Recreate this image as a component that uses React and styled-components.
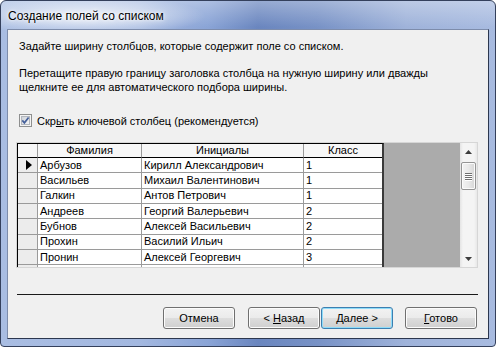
import React from 'react';
import styled, { createGlobalStyle } from 'styled-components';

const GlobalStyle = createGlobalStyle`
  html, body {
    margin: 0;
    padding: 0;
    background: #ffffff;
  }
  * {
    box-sizing: border-box;
  }
`;

const Window = styled.div`
  width: 496px;
  height: 347px;
  border: 1px solid #34405c;
  border-radius: 6px 6px 4px 4px;
  padding: 28px 6px 7px 6px;
  display: flex;
  flex-direction: column;
  position: relative;
  font-family: "Liberation Sans", Arial, sans-serif;
  background:
    radial-gradient(ellipse 120px 20px at 85px 15px, rgba(255, 255, 255, 0.8), rgba(255, 255, 255, 0) 100%),
    linear-gradient(180deg, rgba(255, 255, 255, 0.3) 0px, rgba(255, 255, 255, 0) 26px),
    linear-gradient(90deg, #a9bde2 0%, #a3b8e0 28%, #8aa4d6 42%, #6a86bf 52%, #7892c6 64%, #9fb3da 82%, #a8bbe0 100%);
`;

const Title = styled.div`
  position: absolute;
  left: 7px;
  top: 8px;
  font-size: 12px;
  color: #000;
  text-shadow: 0 0 6px #fff, 0 0 3px #fff;
`;

const Client = styled.div`
  flex: 1;
  background: #f0f0f0;
  border: 1px solid #7d8cab;
  border-right-color: #2c374f;
  border-bottom-color: #2c374f;
  padding: 0 10px 0 8px;
  display: flex;
  flex-direction: column;
  font-size: 11px;
  color: #000;
`;

const Intro = styled.p`
  margin: 9px 0 0 3px;
  line-height: 15px;
`;

const Hint = styled.p`
  margin: 12px 0 0 3px;
  line-height: 14px;
`;

const CheckRow = styled.label`
  margin: 19px 0 0 3px;
  height: 15px;
  display: flex;
  align-items: center;
  gap: 5px;
`;

const Key = styled.span`
  text-decoration: underline;
`;

const TableBox = styled.div`
  margin-top: 14px;
  height: 126px;
  border: 1px solid #d6d6d6;
  display: flex;
  overflow: hidden;
`;

const Sheet = styled.div`
  display: grid;
  grid-template-columns: 20px 104px 162px 78px;
  grid-template-rows: 14px;
  grid-auto-rows: 15.33px;
  border-top: 1px solid #000;
  border-left: 1px solid #000;
  border-right: 2px solid #3a3a3a;
  align-self: flex-start;
  font-size: 11px;
`;

const Cell = styled.div`
  background: ${p => (p.$head ? '#f7f7f7' : p.$sel ? '#ececec' : '#ffffff')};
  border-right: ${p => (p.$last ? 'none' : '1px solid #9a9a9a')};
  border-bottom: 1px solid ${p => (p.$head ? '#000' : '#9a9a9a')};
  padding-left: ${p => (p.$head || p.$sel ? '0' : '2px')};
  display: flex;
  align-items: center;
  justify-content: ${p => (p.$head || p.$sel ? 'center' : 'flex-start')};
  white-space: nowrap;
  overflow: hidden;
  line-height: 13px;
`;

const Pointer = styled.span`
  width: 0;
  height: 0;
  border-top: 5px solid transparent;
  border-bottom: 5px solid transparent;
  border-left: 6px solid #000;
  margin-left: 2px;
`;

const Empty = styled.div`
  flex: 1;
  background: #ababab;
`;

const ScrollBar = styled.div`
  width: 17px;
  display: flex;
  flex-direction: column;
  background: linear-gradient(90deg, #e4e4e4 0px, #f4f4f4 3px, #f4f4f4 14px, #e8e8e8 17px);
`;

const Arrow = styled.div`
  height: 17px;
  display: flex;
  align-items: center;
  justify-content: center;
`;

const Track = styled.div`
  flex: 1;
  padding: 2px 1px 0 1px;
`;

const Thumb = styled.div`
  height: 28px;
  border: 1px solid #959595;
  border-radius: 2px;
  background: linear-gradient(90deg, #f3f3f3 0%, #e9e9e9 50%, #d6d6d6 100%);
  box-shadow: inset 0 0 0 1px #fbfbfb;
  display: flex;
  flex-direction: column;
  align-items: center;
  justify-content: center;
  gap: 1px;
`;

const Grip = styled.span`
  width: 7px;
  height: 1px;
  background: #6f6f6f;
  box-shadow: 0 1px 0 #fff;
`;

const Divider = styled.hr`
  margin: 26px 0 0 1px;
  border: none;
  border-top: 1px solid #1a1a1a;
  height: 0;
`;

const Buttons = styled.div`
  margin: 12px 1px 0 0;
  display: flex;
  justify-content: flex-end;
`;

const Button = styled.button`
  width: 72px;
  height: 22px;
  margin-left: ${p => p.$gap || 0}px;
  font-family: "Liberation Sans", Arial, sans-serif;
  font-size: 11px;
  color: #000;
  border: 1px solid ${p => (p.$default ? '#3c7fb1' : '#707070')};
  border-radius: 3px;
  background: linear-gradient(180deg, #f2f2f2 0%, #ebebeb 48%, #dddddd 52%, #cfcfcf 100%);
  box-shadow: inset 0 0 0 1px ${p => (p.$default ? '#8fdcf9' : '#fcfcfc')};
  padding: 0;
`;

const rows = [
  ['Арбузов', 'Кирилл Александрович', '1'],
  ['Васильев', 'Михаил Валентинович', '1'],
  ['Галкин', 'Антов Петрович', '1'],
  ['Андреев', 'Георгий Валерьевич', '2'],
  ['Бубнов', 'Алексей Васильевич', '2'],
  ['Прохин', 'Василий Ильич', '2'],
  ['Пронин', 'Алексей Георгевич', '3'],
  ['Сергеев', 'Сергей Петрович', '3'],
];

const CheckIcon = () => (
  <svg width="13" height="13" viewBox="0 0 13 13">
    <defs>
      <linearGradient id="cb" x1="0" y1="0" x2="1" y2="1">
        <stop offset="0" stopColor="#cdd1d8" />
        <stop offset="1" stopColor="#f7f7f7" />
      </linearGradient>
    </defs>
    <rect x="0.5" y="0.5" width="12" height="12" fill="#f4f4f4" stroke="#8e8f8f" />
    <rect x="2.5" y="2.5" width="8" height="8" fill="url(#cb)" stroke="#b2b6bd" />
    <path d="M3.3 6.4 L5.4 8.8 L9.6 3.4" fill="none" stroke="#45609a" strokeWidth="1.7" />
  </svg>
);

const App = () => {
  return (
    <Window>
      <GlobalStyle />
      <Title>Создание полей со списком</Title>
      <Client>
        <Intro>Задайте ширину столбцов, которые содержит поле со списком.</Intro>
        <Hint>
          Перетащите правую границу заголовка столбца на нужную ширину или дважды
          <br />
          щелкните ее для автоматического подбора ширины.
        </Hint>
        <CheckRow>
          <CheckIcon />
          <span>
            Скр<Key>ы</Key>ть ключевой столбец (рекомендуется)
          </span>
        </CheckRow>

        <TableBox>
          <Sheet>
            <Cell $head />
            <Cell $head>Фамилия</Cell>
            <Cell $head>Инициалы</Cell>
            <Cell $head $last>Класс</Cell>
            {rows.map((r, i) => (
              <React.Fragment key={i}>
                <Cell $sel>{i === 0 && <Pointer />}</Cell>
                <Cell>{r[0]}</Cell>
                <Cell>{r[1]}</Cell>
                <Cell $last>{r[2]}</Cell>
              </React.Fragment>
            ))}
          </Sheet>
          <Empty />
          <ScrollBar>
            <Arrow>
              <svg width="7" height="4" viewBox="0 0 7 4">
                <path d="M0 4 L3.5 0 L7 4 Z" fill="#3c3c3c" />
              </svg>
            </Arrow>
            <Track>
              <Thumb>
                <Grip />
                <Grip />
                <Grip />
                <Grip />
              </Thumb>
            </Track>
            <Arrow>
              <svg width="7" height="4" viewBox="0 0 7 4">
                <path d="M0 0 L7 0 L3.5 4 Z" fill="#3c3c3c" />
              </svg>
            </Arrow>
          </ScrollBar>
        </TableBox>

        <Divider />

        <Buttons>
          <Button>Отмена</Button>
          <Button $gap={13}>
            &lt; <Key>Н</Key>азад
          </Button>
          <Button $gap={1} $default>
            <Key>Д</Key>алее &gt;
          </Button>
          <Button $gap={12}>
            <Key>Г</Key>отово
          </Button>
        </Buttons>
      </Client>
    </Window>
  );
};

export default App;
